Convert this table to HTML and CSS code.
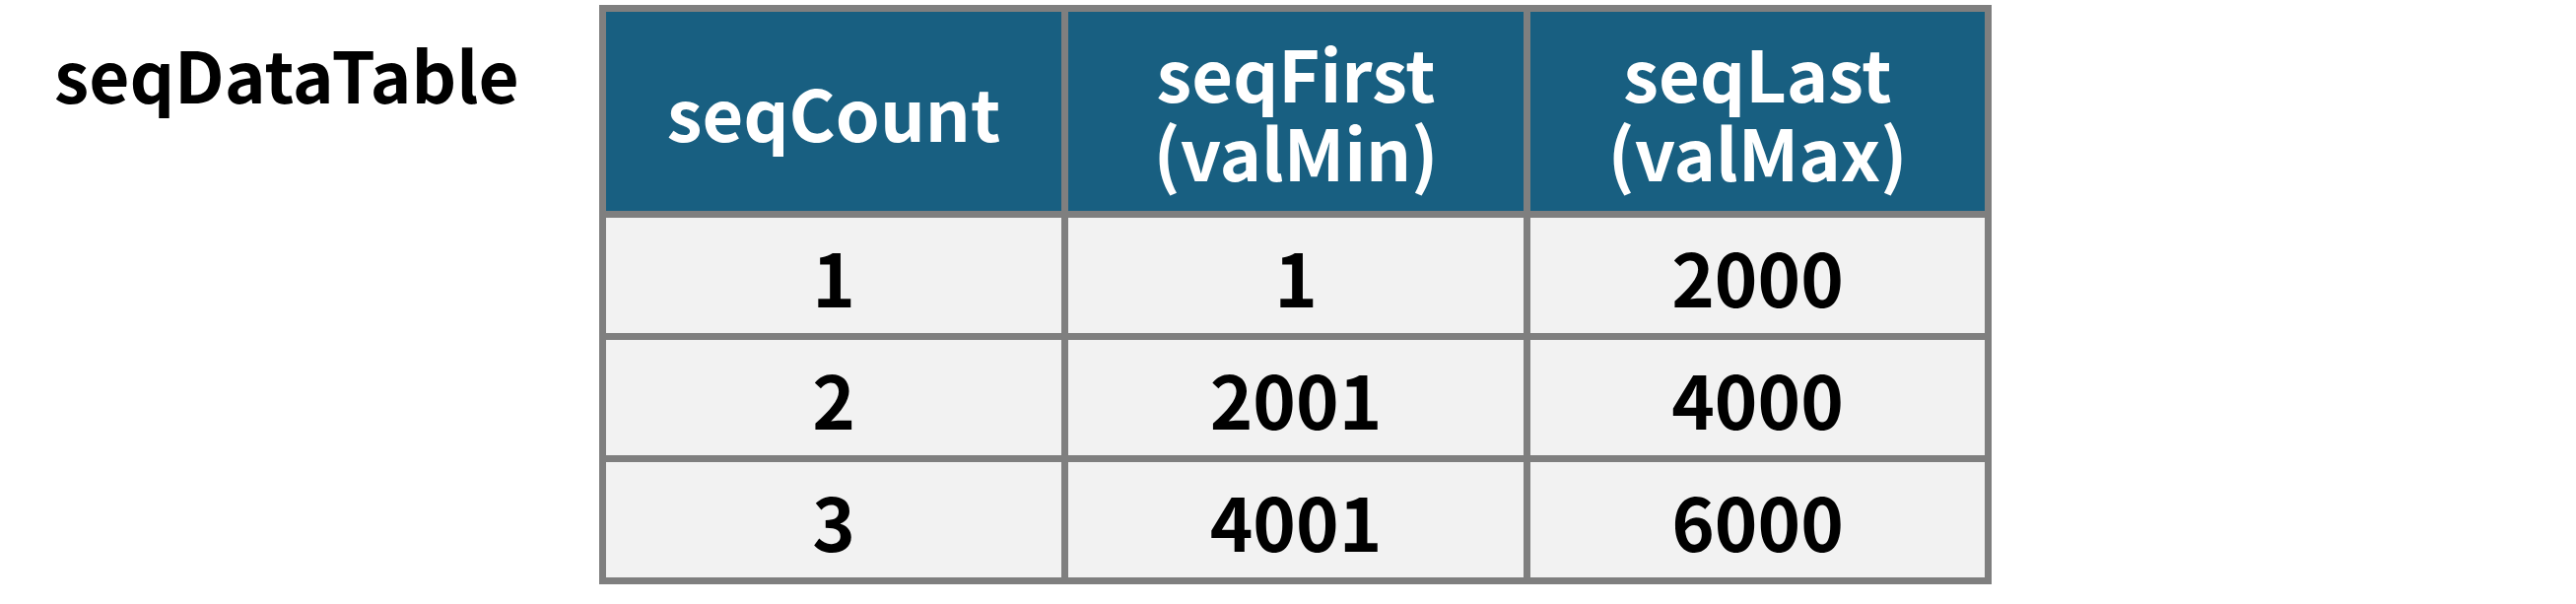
FILE: index.html
```html
<!DOCTYPE html>
<html lang="ja">
<head>
<meta charset="utf-8">
<title>seqDataTable</title>
<link rel="stylesheet" href="styles.css">
</head>
<body>
<div class="page">
  <div class="title">seqDataTable</div>
  <div class="grid">
    <div class="cell head">seqCount</div>
    <div class="cell head">seqFirst<br>(valMin)</div>
    <div class="cell head">seqLast<br>(valMax)</div>
    <div class="cell body">1</div>
    <div class="cell body">1</div>
    <div class="cell body">2000</div>
    <div class="cell body">2</div>
    <div class="cell body">2001</div>
    <div class="cell body">4000</div>
    <div class="cell body">3</div>
    <div class="cell body">4001</div>
    <div class="cell body">6000</div>
  </div>
</div>
</body>
</html>
```

FILE: styles.css
```css
html, body {
  margin: 0;
  padding: 0;
  background: #ffffff;
}

.page {
  display: flex;
  align-items: flex-start;
  padding: 5px 0 0 55px;
  font-family: "Noto Sans CJK JP", "Noto Sans", sans-serif;
}

.title {
  width: 553px;
  margin-top: 34px;
  font-size: 71px;
  line-height: 1;
  font-weight: 700;
  color: #000000;
}

.grid {
  display: grid;
  grid-template-columns: 462px 462px 461px;
  grid-template-rows: 202px 117px 117px 117px;
  gap: 7px;
  padding: 7px;
  background: #7f7f7f;
}

.cell {
  display: flex;
  align-items: center;
  justify-content: center;
  text-align: center;
  font-weight: 700;
}

.head {
  background: #185f81;
  color: #ffffff;
  font-size: 72px;
  line-height: 80px;
}

.body {
  background: #f2f2f2;
  color: #000000;
  font-size: 74px;
  line-height: 1;
}
```
